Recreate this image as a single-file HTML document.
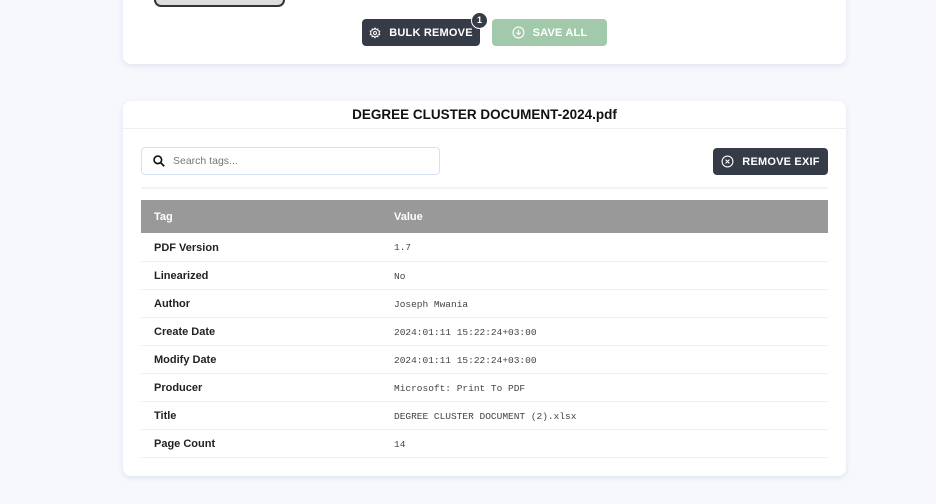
<!DOCTYPE html>
<html><head><meta charset="utf-8"><style>
*{box-sizing:border-box;margin:0;padding:0}
body{width:936px;height:504px;overflow:hidden;background:#f6f8fc;font-family:"Liberation Sans",sans-serif;position:relative}
.card{position:absolute;left:123px;width:723px;background:#fff;border-radius:8px;box-shadow:0 2px 6px rgba(120,140,190,.18)}
.btn{position:absolute;height:27px;border-radius:4px;color:#fff;font-weight:bold;font-size:11px;display:flex;align-items:center;justify-content:center;gap:8px;letter-spacing:.2px}
td.mono{font-family:"Liberation Mono",monospace;font-size:9.5px;color:#444;font-weight:normal}
table{border-collapse:collapse;width:687px;position:absolute;left:18px;top:99px}
td{height:28px;border-bottom:1px solid #f0f0f0;font-size:11px;font-weight:bold;color:#222;padding-top:2px}
th{height:33px;background:#999;color:#fff;font-size:11px;text-align:left;padding-top:1px}
td:first-child,th:first-child{padding-left:13px;width:253px}
</style></head><body>
<div class="card" style="top:-10px;height:74px">
 <div style="position:absolute;left:31px;top:10px;width:131px;height:7px;border:2px solid #333;border-top:none;border-radius:0 0 8px 8px;background:#ddd"></div>
 <div class="btn" style="left:239px;top:29px;width:118px;background:#363c47">
  <svg width="12" height="12" viewBox="0 0 24 24" fill="none" stroke="#fff" stroke-width="2"><circle cx="12" cy="12" r="3"/><path d="M12 2l2 3 3.5-1 .5 3.5 3.5 1-1.5 3.5 1.5 3-3.5 1-.5 3.5-3.5-1-2 3-2-3-3.5 1-.5-3.5-3.5-1 1.5-3-1.5-3.5 3.5-1 .5-3.5 3.5 1z"/></svg>BULK REMOVE</div>
 <div style="position:absolute;left:348px;top:22px;width:17px;height:17px;border-radius:50%;background:#363c47;border:1.5px solid #fff;color:#fff;font-size:9px;font-weight:bold;text-align:center;line-height:14px">1</div>
 <div class="btn" style="left:369px;top:29px;width:115px;background:#a3c9ab">
  <svg width="13" height="13" viewBox="0 0 24 24" fill="none" stroke="#fff" stroke-width="2"><circle cx="12" cy="12" r="10"/><path d="M12 7v9M8 12l4 4 4-4"/></svg>SAVE ALL</div>
</div>
<div class="card" style="top:101px;height:375px">
 <div style="text-align:center;font-weight:bold;font-size:13.5px;color:#111;padding-top:6px;height:28px;border-bottom:1px solid #f0f0f0">DEGREE CLUSTER DOCUMENT-2024.pdf</div>
 <div style="position:absolute;left:18px;top:46px;width:299px;height:28px;border:1px solid #d6e2f3;border-radius:4px;display:flex;align-items:center;padding-left:10px;gap:7px;font-size:10.5px;color:#777">
  <svg width="14" height="14" viewBox="0 0 24 24" fill="none" stroke="#111" stroke-width="2.8"><circle cx="10" cy="10" r="6.5"/><path d="M15 15l6 6"/></svg>Search tags...</div>
 <div class="btn" style="left:590px;top:47px;width:115px;background:#363c47">
  <svg width="13" height="13" viewBox="0 0 24 24" fill="none" stroke="#fff" stroke-width="2"><circle cx="12" cy="12" r="10"/><path d="M8.5 8.5l7 7M15.5 8.5l-7 7"/></svg>REMOVE EXIF</div>
 <div style="position:absolute;left:18px;top:86px;width:687px;height:2px;background:#f1f3f6"></div>
 <table>
  <tr><th>Tag</th><th>Value</th></tr>
  <tr><td>PDF Version</td><td class="mono">1.7</td></tr>
  <tr><td>Linearized</td><td class="mono">No</td></tr>
  <tr><td>Author</td><td class="mono">Joseph Mwania</td></tr>
  <tr><td>Create Date</td><td class="mono">2024:01:11 15:22:24+03:00</td></tr>
  <tr><td>Modify Date</td><td class="mono">2024:01:11 15:22:24+03:00</td></tr>
  <tr><td>Producer</td><td class="mono">Microsoft: Print To PDF</td></tr>
  <tr><td>Title</td><td class="mono">DEGREE CLUSTER DOCUMENT (2).xlsx</td></tr>
  <tr><td>Page Count</td><td class="mono">14</td></tr>
 </table>
</div>
</body></html>
